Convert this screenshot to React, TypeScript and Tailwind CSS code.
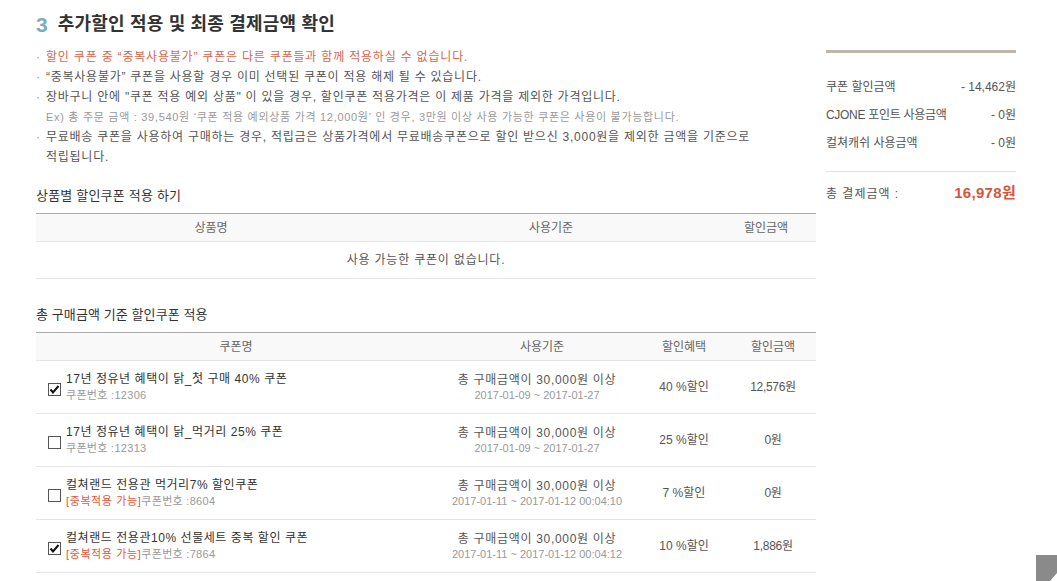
import React from "react";

const FONT = '"Liberation Sans", "Noto Sans CJK KR", "Noto Sans", sans-serif';

function CheckBox({ checked }: { checked: boolean }) {
  return (
    <svg width="13" height="13" viewBox="0 0 13 13" className="shrink-0">
      <rect x="0.5" y="0.5" width="12" height="12" fill="#fff" stroke="#555" />
      {checked && (
        <path d="M2.5 6.5 L5 9.5 L10.5 3" fill="none" stroke="#111" strokeWidth="2" />
      )}
    </svg>
  );
}

type Coupon = {
  checked: boolean;
  name: string;
  dup: boolean;
  no: string;
  date: string;
  benefit: string;
  amount: string;
};

const coupons: Coupon[] = [
  {
    checked: true,
    name: "17년 정유년 혜택이 닭_첫 구매 40% 쿠폰",
    dup: false,
    no: "쿠폰번호 :12306",
    date: "2017-01-09 ~ 2017-01-27",
    benefit: "40 %할인",
    amount: "12,576원",
  },
  {
    checked: false,
    name: "17년 정유년 혜택이 닭_먹거리 25% 쿠폰",
    dup: false,
    no: "쿠폰번호 :12313",
    date: "2017-01-09 ~ 2017-01-27",
    benefit: "25 %할인",
    amount: "0원",
  },
  {
    checked: false,
    name: "컬쳐랜드 전용관 먹거리7% 할인쿠폰",
    dup: true,
    no: "쿠폰번호 :8604",
    date: "2017-01-11 ~ 2017-01-12 00:04:10",
    benefit: "7 %할인",
    amount: "0원",
  },
  {
    checked: true,
    name: "컬쳐랜드 전용관10% 선물세트 중복 할인 쿠폰",
    dup: true,
    no: "쿠폰번호 :7864",
    date: "2017-01-11 ~ 2017-01-12 00:04:12",
    benefit: "10 %할인",
    amount: "1,886원",
  },
];

function Bullet({ children, red }: { children: React.ReactNode; red?: boolean }) {
  return (
    <li className="flex leading-[20px] text-[12px]">
      <span className="w-[10px] shrink-0 text-[#999]">·</span>
      <span className={red ? "text-[#d4694f] tracking-[0.8px]" : "text-[#555] tracking-[0.75px]"}>
        {children}
      </span>
    </li>
  );
}

export default function App() {
  return (
    <div
      className="relative w-[1057px] h-[581px] overflow-hidden bg-white"
      style={{ fontFamily: FONT }}
    >
      <div className="flex pl-[36px] pt-[9px]">
        {/* Left column */}
        <div className="w-[780px] shrink-0">
          <h2 className="h-[30px] flex items-center">
            <span className="text-[21px] font-bold text-[#7eacba] mr-[10px] leading-none">3</span>
            <span className="text-[18px] font-bold text-[#333] leading-none tracking-[0.2px]">
              추가할인 적용 및 최종 결제금액 확인
            </span>
          </h2>

          <ul className="mt-[8px]">
            <Bullet red>할인 쿠폰 중 “중복사용불가” 쿠폰은 다른 쿠폰들과 함께 적용하실 수 없습니다.</Bullet>
            <Bullet>“중복사용불가” 쿠폰을 사용할 경우 이미 선택된 쿠폰이 적용 해제 될 수 있습니다.</Bullet>
            <Bullet>
              장바구니 안에 "쿠폰 적용 예외 상품" 이 있을 경우, 할인쿠폰 적용가격은 이 제품 가격을 제외한 가격입니다.
            </Bullet>
            <li className="pl-[10px] leading-[20px] text-[11px] text-[#999] tracking-[0.7px]">
              Ex) 총 주문 금액 : 39,540원 ‘쿠폰 적용 예외상품 가격 12,000원’ 인 경우, 3만원 이상 사용 가능한 쿠폰은 사용이 불가능합니다.
            </li>
            <Bullet>
              무료배송 쿠폰을 사용하여 구매하는 경우, 적립금은 상품가격에서 무료배송쿠폰으로 할인 받으신 3,000원을 제외한 금액을 기준으로
              <br />
              적립됩니다.
            </Bullet>
          </ul>

          <h3 className="mt-[19px] leading-[20px] text-[13px] text-[#333] tracking-[0.2px]">상품별 할인쿠폰 적용 하기</h3>
          <table className="mt-[7px] w-[780px] border-collapse table-fixed">
            <colgroup>
              <col className="w-[350px]" />
              <col className="w-[330px]" />
              <col className="w-[100px]" />
            </colgroup>
            <thead>
              <tr className="h-[28px] bg-[#f9f9f9] border-t border-t-[#aaa] border-b border-b-[#e5e5e5]">
                <th className="font-normal text-[12px] text-[#666]">상품명</th>
                <th className="font-normal text-[12px] text-[#666]">사용기준</th>
                <th className="font-normal text-[12px] text-[#666]">할인금액</th>
              </tr>
            </thead>
            <tbody>
              <tr className="h-[37px] border-b border-b-[#e5e5e5]">
                <td colSpan={3} className="text-center text-[12px] text-[#555] tracking-[0.8px]">
                  사용 가능한 쿠폰이 없습니다.
                </td>
              </tr>
            </tbody>
          </table>

          <h3 className="mt-[26px] leading-[20px] text-[13px] text-[#333] tracking-[0.1px]">총 구매금액 기준 할인쿠폰 적용</h3>
          <table className="mt-[7px] w-[780px] border-collapse table-fixed">
            <colgroup>
              <col className="w-[400px]" />
              <col className="w-[202px]" />
              <col className="w-[92px]" />
              <col className="w-[86px]" />
            </colgroup>
            <thead>
              <tr className="h-[28px] bg-[#f9f9f9] border-t border-t-[#aaa] border-b border-b-[#e5e5e5]">
                <th className="font-normal text-[12px] text-[#666]">쿠폰명</th>
                <th className="font-normal text-[12px] text-[#666] pl-[10px]">사용기준</th>
                <th className="font-normal text-[12px] text-[#666]">할인혜택</th>
                <th className="font-normal text-[12px] text-[#666]">할인금액</th>
              </tr>
            </thead>
            <tbody>
              {coupons.map((c, i) => (
                <tr key={i} className="h-[53px] border-b border-b-[#e5e5e5]">
                  <td className="pl-[12px]">
                    <div className="flex items-center">
                      <div className="mt-[4px]">
                        <CheckBox checked={c.checked} />
                      </div>
                      <div className="ml-[5px]">
                        <div className="text-[12px] leading-[16px] text-[#333] tracking-[0.55px]">{c.name}</div>
                        <div className="text-[11px] leading-[16px] text-[#999] tracking-[0.3px]">
                          {c.dup && <span className="text-[#e0593a] tracking-[0.6px]">[중복적용 가능]</span>}
                          {c.no}
                        </div>
                      </div>
                    </div>
                  </td>
                  <td className="text-center">
                    <div className="text-[12px] leading-[16px] text-[#555] tracking-[0.7px]">총 구매금액이 30,000원 이상</div>
                    <div className="text-[11px] leading-[15px] text-[#999]">{c.date}</div>
                  </td>
                  <td className="text-center text-[12px] text-[#555]">{c.benefit}</td>
                  <td className="text-center text-[12px] text-[#555] tracking-[-0.3px]">{c.amount}</td>
                </tr>
              ))}
            </tbody>
          </table>
        </div>

        {/* Right column */}
        <div className="w-[190px] ml-[10px] mt-[41px] shrink-0">
          <div className="border-t-[3px] border-t-[#bdb6ab] pt-[20px]">
            <div className="h-[28px] flex items-center justify-between text-[12px] text-[#555]">
              <span>쿠폰 할인금액</span>
              <span>- 14,462원</span>
            </div>
            <div className="h-[28px] flex items-center justify-between text-[12px] text-[#555]">
              <span className="tracking-[-0.3px]">CJONE 포인트 사용금액</span>
              <span>- 0원</span>
            </div>
            <div className="h-[28px] flex items-center justify-between text-[12px] text-[#555]">
              <span>컬쳐캐쉬 사용금액</span>
              <span>- 0원</span>
            </div>
          </div>
          <div className="mt-[14px] border-t border-t-[#e3e0d9] h-[44px] flex items-center justify-between">
            <span className="text-[12px] text-[#555] tracking-[1px]">총 결제금액 :</span>
            <span className="text-[15px] font-bold text-[#d5553b] tracking-[0.3px]">16,978원</span>
          </div>
        </div>
      </div>

      {/* scroll-top button partially visible */}
      <div className="absolute right-0 bottom-0 w-[21px] h-[26px] bg-[#8a8a8a]">
        <svg width="21" height="26" viewBox="0 0 21 26" className="absolute inset-0">
          <polygon points="21,18 21,26 14,26" fill="#fff" />
        </svg>
      </div>
    </div>
  );
}
